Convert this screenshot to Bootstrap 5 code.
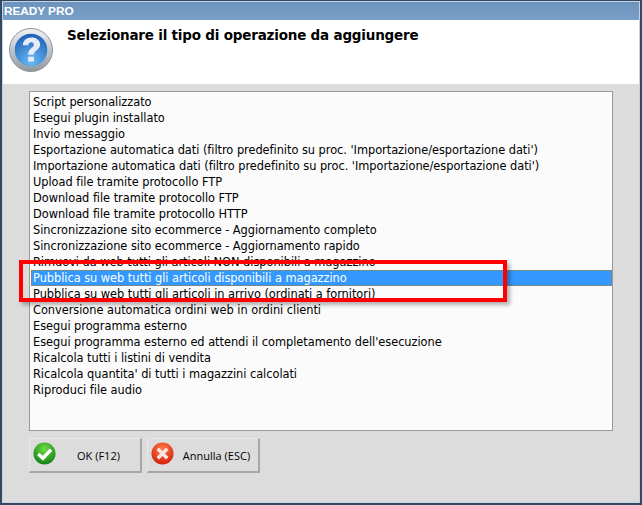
<!DOCTYPE html>
<html lang="en">
<head>
  <meta charset="UTF-8">
  <title>READY PRO</title>
  <link href="https://cdn.jsdelivr.net/npm/bootstrap@5.3.0/dist/css/bootstrap.min.css" rel="stylesheet">
  <style>
    html, body { height: 100%; }
    body { background: #dcdcdc; font-family: "DejaVu Sans", sans-serif; font-size: 11.4px; letter-spacing: -.04px; color: #000; overflow: hidden; }
    .app-window { width: 642px; height: 505px; border: solid #34495e; border-width: 1px 2px 2px 2px; box-shadow: inset 0 0 0 1px #c4d2e2; position: relative; padding: 1px; }
    .app-title { height: 18px; background: linear-gradient(#6c93bd, #7aa0c8); color: #fff; font-family: "Liberation Sans", sans-serif; font-weight: 700; font-size: 11.8px; line-height: 18px; padding-left: 1px; }
    .app-head { height: 64px; background: #fff; padding: 8px 0 0 6px; gap: 14px; }
    .app-head h1 { font-size: 13.5px; font-weight: 700; margin: -1px 0 0; font-family: "DejaVu Sans", sans-serif; letter-spacing: -.2px; }
    .app-body { background: #dcdcdc; padding: 7px 26px 0 26px; height: 418px; }
    .op-list { height: 340px; background: #fbfbfb; border: 1px solid #9a9a9a; padding: 2px 0 0 1px; }
    .op-row { height: 16px; line-height: 16px; padding-left: 2px; white-space: nowrap; }
    .op-row.sel { background: #3399ff; color: #fff; outline: 1px dotted #b8791f; outline-offset: -1px; }
    .act-btn { width: 113px; height: 35px; background: #dcdcdc; border: 1px solid #a6a6a6; border-top-color: #e8e8e8; border-left-color: #e8e8e8; border-right-width: 2px; border-bottom-width: 2px; border-radius: 0; padding: 3px 0 0 3px; color: #000; font-family: "Open Sans", sans-serif; font-size: 11px; letter-spacing: 0; }
    .act-btn svg { align-self: flex-start; }
    .act-btn span { flex: 1; text-align: center; padding-left: 1px; }
    .btn-gap { gap: 5px; margin-top: 7px; }
    .red-mark { position: absolute; left: 17px; top: 259px; width: 488px; height: 42px; border: 4px solid #ff0000; box-shadow: 3px 3px 4px rgba(0,0,0,.3); pointer-events: none; }
  </style>
</head>
<body>

<div class="app-window">
  <div class="app-title">READY PRO</div>

  <div class="app-head d-flex">
    <svg width="44" height="44" viewBox="0 0 46 46" class="flex-shrink-0">
      <defs>
        <linearGradient id="qRing" x1="0" y1="0" x2="0" y2="1"><stop offset="0" stop-color="#f0f2f5"/><stop offset="1" stop-color="#8f989f"/></linearGradient>
        <radialGradient id="qBall" cx=".5" cy=".85" r=".85"><stop offset="0" stop-color="#6cbcf5"/><stop offset="1" stop-color="#1c5fb5"/></radialGradient>
      </defs>
      <circle cx="23" cy="23" r="22.500" fill="url(#qRing)" stroke="#8b9499"/>
      <circle cx="23" cy="23" r="17" fill="url(#qBall)"/>
      <path d="M14.500 18c0-5 4-8 9-8s9 2.800 9 7.300c0 6-6.500 5.700-6.500 10.700h-6c0-7 6-7.300 6-10.500 0-1.500-1.200-2.500-2.700-2.500-1.900 0-3 1.300-3 3z" fill="#e6ebf7"/>
      <rect x="20" y="30" width="6" height="5" fill="#e6ebf7"/>
    </svg>
    <h1>Selezionare il tipo di operazione da aggiungere</h1>
  </div>

  <div class="app-body">
    <div class="op-list">
      <div class="op-row">Script personalizzato</div>
      <div class="op-row">Esegui plugin installato</div>
      <div class="op-row">Invio messaggio</div>
      <div class="op-row">Esportazione automatica dati (filtro predefinito su proc. 'Importazione/esportazione dati')</div>
      <div class="op-row">Importazione automatica dati (filtro predefinito su proc. 'Importazione/esportazione dati')</div>
      <div class="op-row">Upload file tramite protocollo FTP</div>
      <div class="op-row">Download file tramite protocollo FTP</div>
      <div class="op-row">Download file tramite protocollo HTTP</div>
      <div class="op-row">Sincronizzazione sito ecommerce - Aggiornamento completo</div>
      <div class="op-row">Sincronizzazione sito ecommerce - Aggiornamento rapido</div>
      <div class="op-row">Rimuovi da web tutti gli articoli NON disponibili a magazzino</div>
      <div class="op-row sel">Pubblica su web tutti gli articoli disponibili a magazzino</div>
      <div class="op-row">Pubblica su web tutti gli articoli in arrivo (ordinati a fornitori)</div>
      <div class="op-row">Conversione automatica ordini web in ordini clienti</div>
      <div class="op-row">Esegui programma esterno</div>
      <div class="op-row">Esegui programma esterno ed attendi il completamento dell'esecuzione</div>
      <div class="op-row">Ricalcola tutti i listini di vendita</div>
      <div class="op-row">Ricalcola quantita' di tutti i magazzini calcolati</div>
      <div class="op-row">Riproduci file audio</div>
    </div>

    <div class="d-flex btn-gap">
      <button type="button" class="btn act-btn d-flex align-items-center">
        <svg width="23" height="23" viewBox="0 0 24 24" class="flex-shrink-0">
          <defs><radialGradient id="okBall" cx=".5" cy=".3" r=".75"><stop offset="0" stop-color="#6fdc45"/><stop offset="1" stop-color="#0b7a12"/></radialGradient></defs>
          <circle cx="12" cy="12" r="11.500" fill="url(#okBall)"/>
          <path d="M5.500 12.500l4.800 4.500 8.500-9" fill="none" stroke="#fff" stroke-width="3.600"/>
        </svg>
        <span>OK (F12)</span>
      </button>
      <button type="button" class="btn act-btn d-flex align-items-center">
        <svg width="23" height="23" viewBox="0 0 24 24" class="flex-shrink-0">
          <defs><radialGradient id="noBall" cx=".5" cy=".3" r=".75"><stop offset="0" stop-color="#ff7a45"/><stop offset="1" stop-color="#cf1a0c"/></radialGradient></defs>
          <circle cx="12" cy="12" r="11.500" fill="url(#noBall)"/>
          <path d="M7 7l10 10m0-10L7 17" fill="none" stroke="#f6e6e0" stroke-width="3.600"/>
        </svg>
        <span>Annulla (ESC)</span>
      </button>
    </div>
  </div>

  <div class="red-mark"></div>
</div>

<script src="https://cdn.jsdelivr.net/npm/bootstrap@5.3.0/dist/js/bootstrap.bundle.min.js"></script>
</body>
</html>
